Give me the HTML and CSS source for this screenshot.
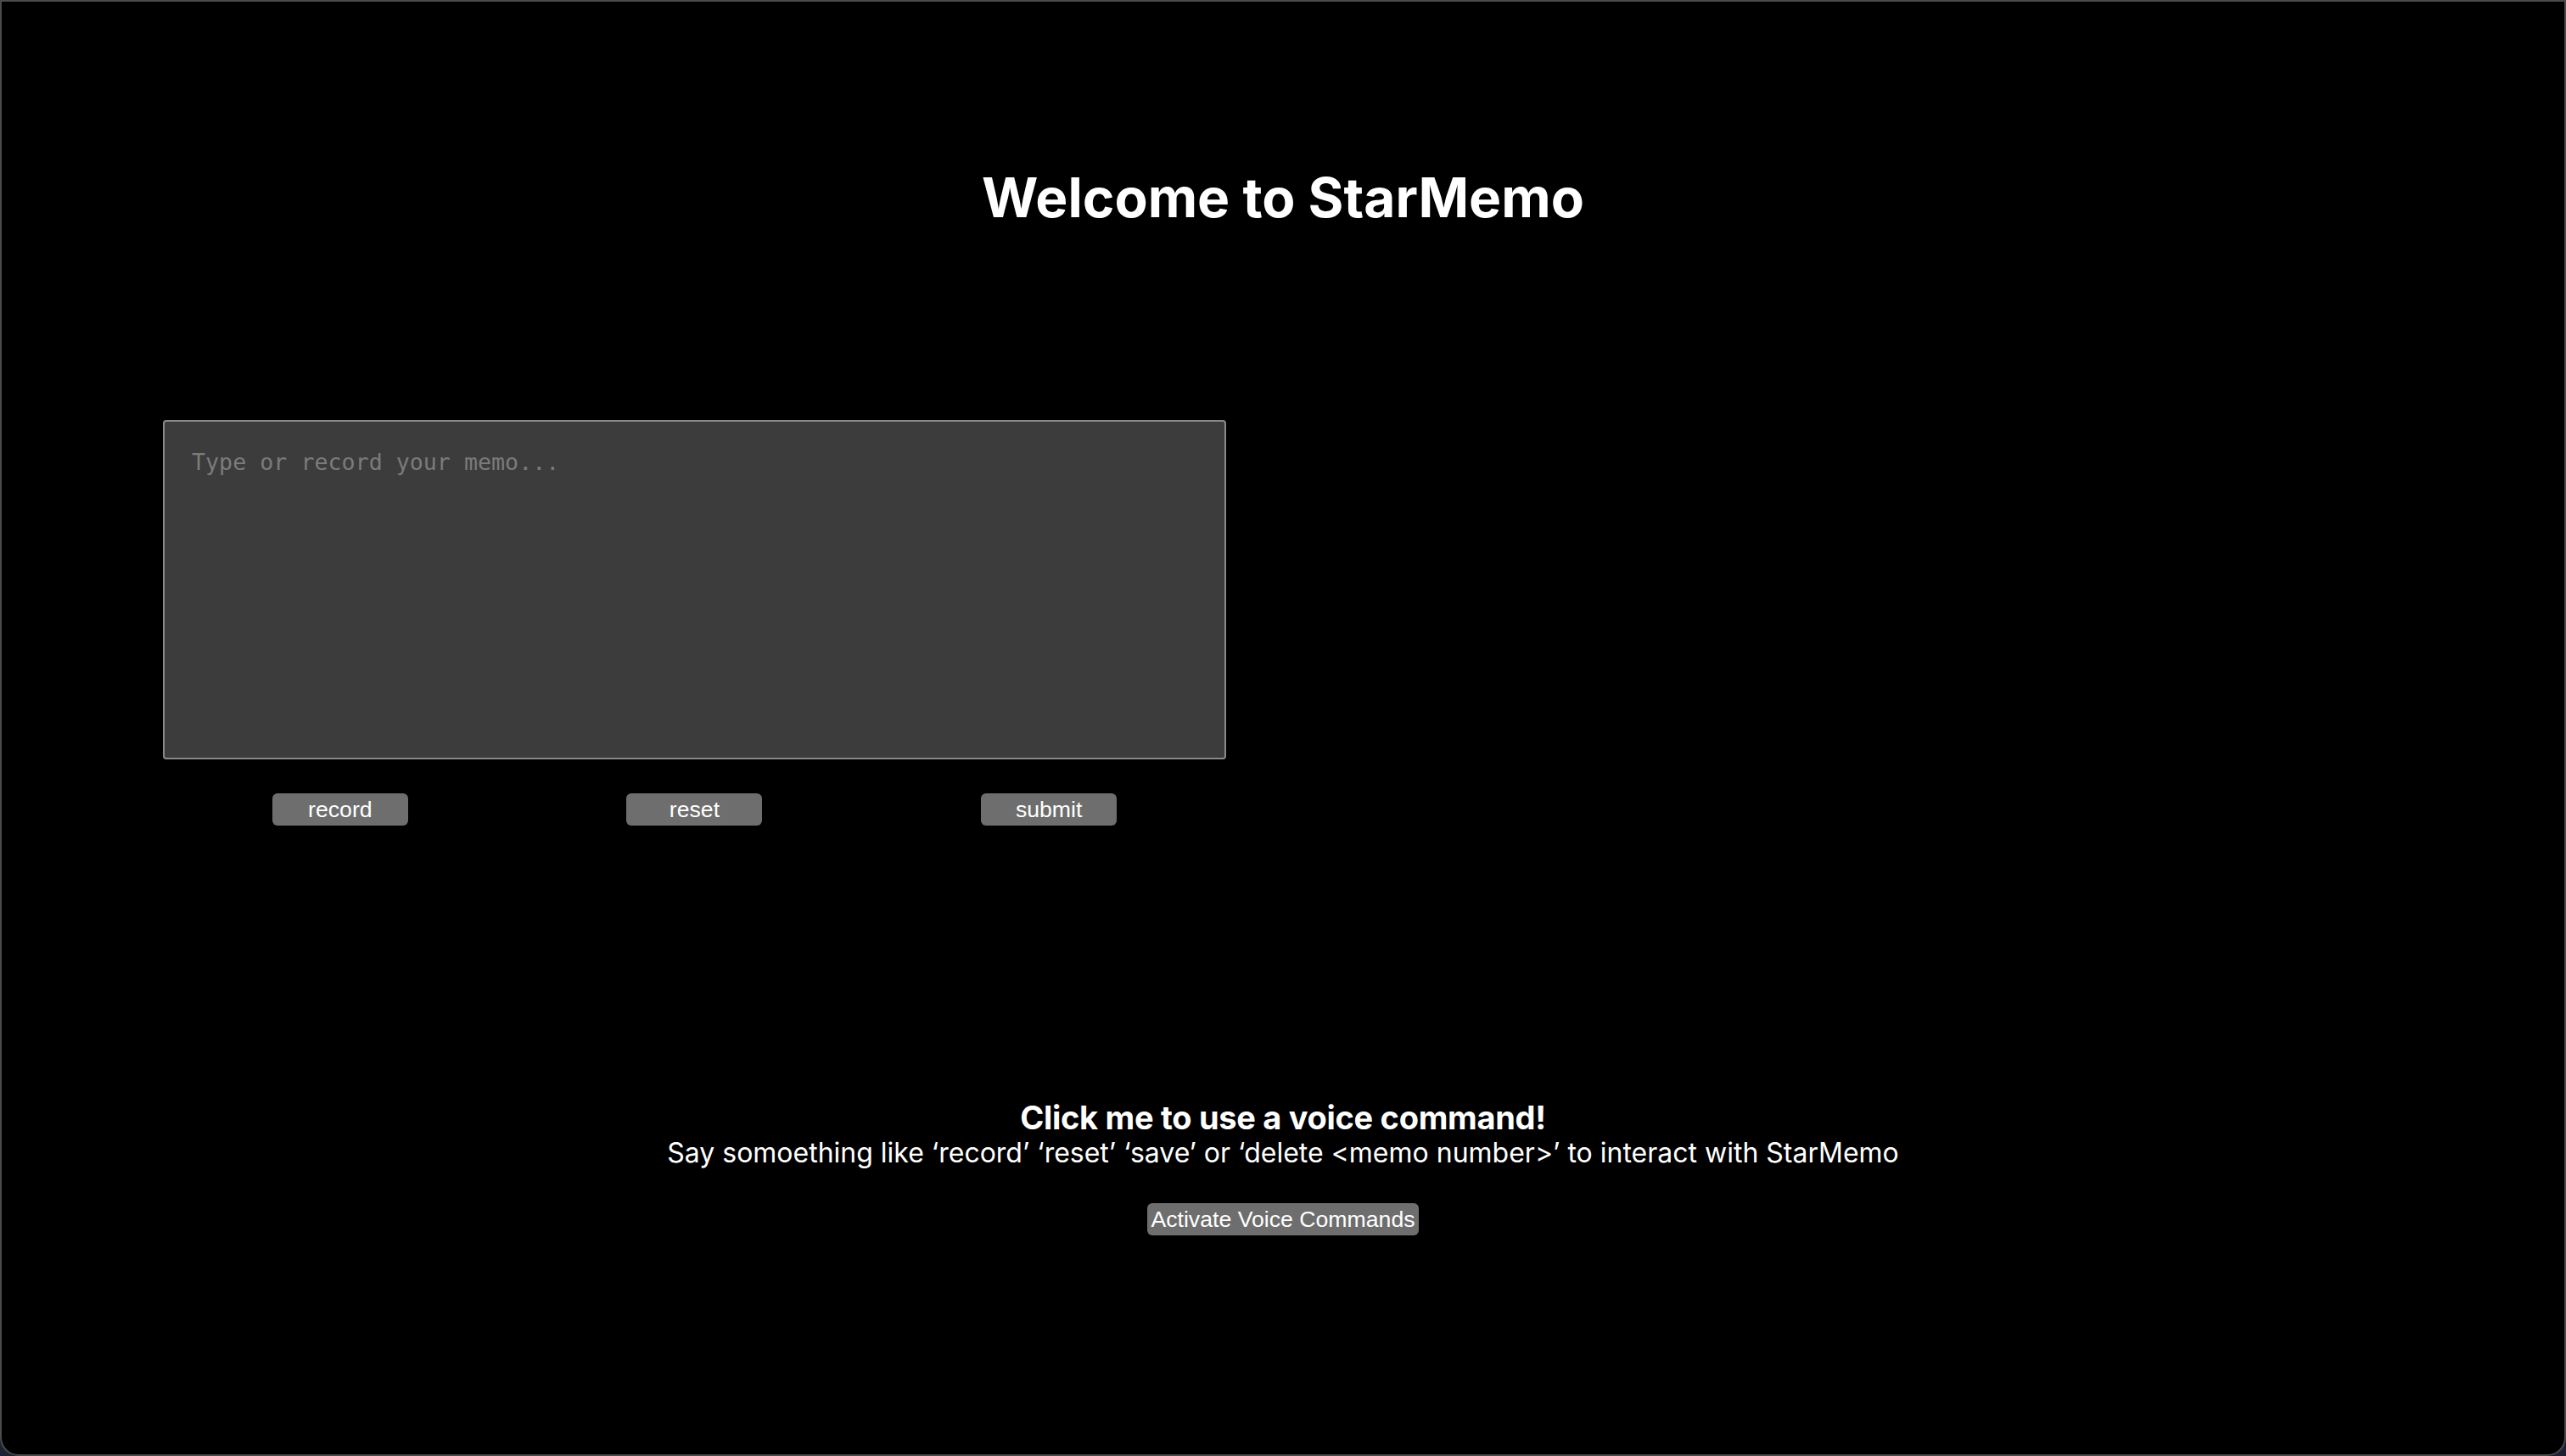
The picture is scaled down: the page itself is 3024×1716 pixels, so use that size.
FILE: index.html
```html
<!DOCTYPE html>
<html lang="en">
<head>
<meta charset="utf-8">
<title>StarMemo</title>
<link rel="stylesheet" href="styles.css">
</head>
<body>
<div class="window">
  <header class="hero">
    <h1 class="hero-title">Welcome to StarMemo</h1>
  </header>
  <main class="workspace">
    <section class="editor">
      <textarea class="memo-input" placeholder="Type or record your memo..."></textarea>
      <div class="actions">
        <button class="action-btn" type="button">record</button>
        <button class="action-btn" type="button">reset</button>
        <button class="action-btn" type="button">submit</button>
      </div>
    </section>
    <section class="memo-list"></section>
  </main>
  <section class="voice">
    <div class="voice-title">Click me to use a voice command!</div>
    <div class="voice-hint">Say somoething like ‘record’ ‘reset’ ‘save’ or ‘delete &lt;memo number&gt;’ to interact with StarMemo</div>
    <button class="voice-btn" type="button">Activate Voice Commands</button>
  </section>
</div>
</body>
</html>
```

FILE: styles.css
```css
html, body {
  margin: 0;
  padding: 0;
  height: 1716px;
  background: #1b2232;
}

.window {
  box-sizing: border-box;
  height: 1716px;
  background: #000;
  border: 2px solid #4b4b4b;
  border-radius: 0 0 22px 22px;
  color: #fff;
  font-family: Inter, "Noto Sans", sans-serif;
  overflow: hidden;
}

.hero {
  padding-top: 192px;
  text-align: center;
}

.hero-title {
  margin: 0;
  font-size: 64px;
  line-height: 78px;
  font-weight: 700;
  letter-spacing: 0;
}

.workspace {
  display: flex;
  margin-top: 223px;
  padding-left: 190px;
}

.editor {
  width: 1253px;
}

.memo-input {
  display: block;
  box-sizing: border-box;
  width: 100%;
  height: 400px;
  margin: 0;
  padding: 32px;
  background: #3c3c3c;
  border: 2px solid #8a8a8a;
  border-radius: 4px;
  color: #fff;
  font-family: "DejaVu Sans Mono", "Liberation Mono", monospace;
  font-size: 26.67px;
  resize: none;
  outline: none;
}

.memo-input::placeholder {
  color: #7b7b7b;
}

.actions {
  display: grid;
  grid-template-columns: repeat(3, 1fr);
  justify-items: center;
  margin-top: 40px;
}

.action-btn {
  width: 160px;
  height: 38px;
  padding: 0;
  background: #6e6e6e;
  color: #fff;
  border: 0;
  border-radius: 6px;
  font-family: "Liberation Sans", Arial, sans-serif;
  font-size: 26.67px;
  line-height: 38px;
}

.voice {
  margin-top: 321px;
  text-align: center;
}

.voice-title {
  font-size: 38px;
  line-height: 46px;
  font-weight: 700;
  letter-spacing: -0.3px;
}

.voice-hint {
  font-size: 32px;
  line-height: 38px;
}

.voice-btn {
  margin-top: 40px;
  height: 38px;
  padding: 0 4px;
  background: #6e6e6e;
  color: #fff;
  border: 0;
  border-radius: 6px;
  font-family: "Liberation Sans", Arial, sans-serif;
  font-size: 26.67px;
  line-height: 38px;
}
```
